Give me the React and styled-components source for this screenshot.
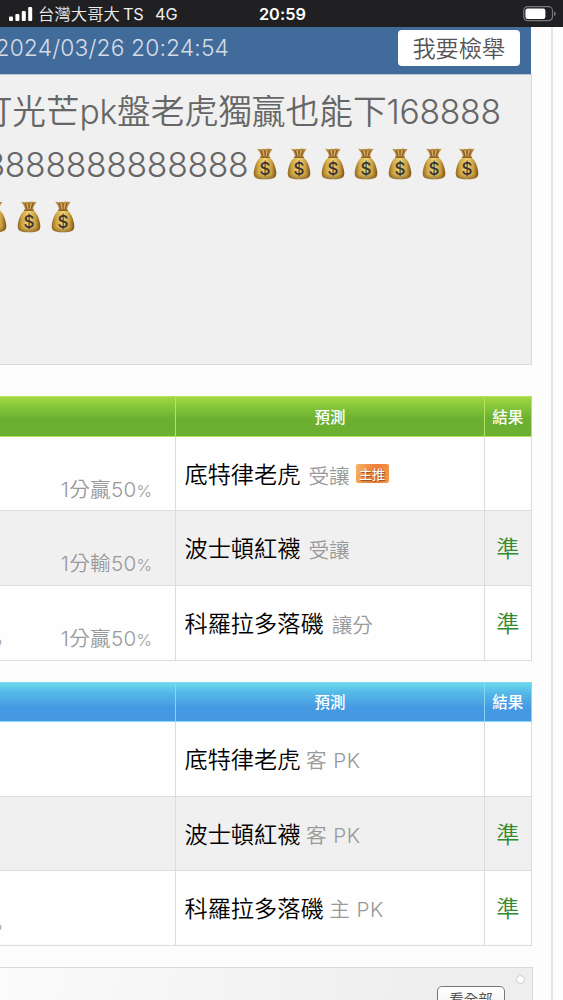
import React from "react";
import styled, { createGlobalStyle } from "styled-components";

const greenRows = [
    { odds: "1分贏50", team: "底特律老虎", kind: "受讓", hot: true },
    { odds: "1分輸50", team: "波士頓紅襪", kind: "受讓", result: "準" },
    { odds: "1分贏50", team: "科羅拉多落磯", kind: "讓分", result: "準", rest: true },
];

const blueRows = [
    { team: "底特律老虎", kind: "客 PK" },
    { team: "波士頓紅襪", kind: "客 PK", result: "準" },
    { team: "科羅拉多落磯", kind: "主 PK", result: "準", rest: true },
];

const MoneyBag = () => (
    <BagIcon viewBox="0 0 24 32">
        <defs>
            <linearGradient id="bag" x1="0" x2="1" y1="0" y2="0">
                <stop offset="0" stopColor="#94661c" />
                <stop offset="0.2" stopColor="#cfa947" />
                <stop offset="0.5" stopColor="#ecd477" />
                <stop offset="0.8" stopColor="#c99d3d" />
                <stop offset="1" stopColor="#7d4f14" />
            </linearGradient>
            <linearGradient id="bagShade" x1="0" x2="0" y1="0" y2="1">
                <stop offset="0.75" stopColor="#6b4210" stopOpacity="0" />
                <stop offset="1" stopColor="#6b4210" stopOpacity="0.6" />
            </linearGradient>
        </defs>
        <path d="M4.2 .8Q8 1.7 10 .7Q13 1.5 15 .6Q17.5 1.5 19.6 .7Q16.8 4.2 15.8 9H8.2Q7.4 4.3 4.2 .8Z" fill="#b98b40" />
        <path d="M8 2L10 8.6M12 2V8.5M16 2L14 8.6" stroke="#805420" strokeWidth="1" fill="none" />
        <path d="M10.2 2.2L11 8M14.2 2.2L13.2 8" stroke="#e0bd70" strokeWidth=".7" fill="none" />
        <path d="M8 9.2H16C20 11.5 22 17 23 22.5C24.3 29.5 21.5 31.3 12 31.3S-.3 29.5 1 22.5C2 17 4 11.5 8 9.2Z" fill="url(#bag)" />
        <path d="M8 9.2H16C20 11.5 22 17 23 22.5C24.3 29.5 21.5 31.3 12 31.3S-.3 29.5 1 22.5C2 17 4 11.5 8 9.2Z" fill="url(#bagShade)" />
        <path d="M7.6 9.2H16.4" stroke="#946526" strokeWidth="1.5" strokeLinecap="round" />
        <text x="12" y="27.2" textAnchor="middle" fontFamily="Inter, sans-serif" fontWeight="500" fontSize="17" fill="#3a3431">$</text>
    </BagIcon>
);

const PickTable = ({ tone, rows }) => (
    <Table>
        <HeadRow $tone={tone}>
            <HeadCell $tone={tone} />
            <HeadCell $tone={tone}>預測</HeadCell>
            <HeadCell $tone={tone}>結果</HeadCell>
        </HeadRow>
        {rows.map((row, i) => (
            <Row key={row.team} $even={i % 2 === 1} $short={tone === "green" ? i === 0 : i === 1}>
                <OddsCell>
                    <Rest>{row.rest && "%"}</Rest>
                    {row.odds && <Odds>{row.odds}<small>%</small></Odds>}
                </OddsCell>
                <PickCell>
                    <Team>{row.team}</Team>
                    <Kind $pk={tone === "blue"}>{row.kind}</Kind>
                    {row.hot && <Hot>主推</Hot>}
                </PickCell>
                <ResultCell>{row.result}</ResultCell>
            </Row>
        ))}
    </Table>
);

const App = () => {
    return (
        <>
            <GlobalStyle />
            <Screen>
                <StatusBar>
                    <Carrier>
                        <SignalIcon viewBox="0 0 24 14">
                            <rect x="0" y="9.4" width="4" height="4.6" rx="1" />
                            <rect x="6.4" y="7" width="4" height="7" rx="1" />
                            <rect x="12.8" y="4" width="4" height="10" rx="1" />
                            <rect x="19.2" y="0" width="4" height="14" rx="1" />
                        </SignalIcon>
                        <CarrierName>台灣大哥大</CarrierName>
                        <CarrierTag>TS</CarrierTag>
                        <Network>4G</Network>
                    </Carrier>
                    <Clock>20:59</Clock>
                    <BatterySide>
                        <BatteryIcon viewBox="0 0 33 16">
                            <rect x=".7" y=".7" width="28.8" height="14" rx="4" fill="none" stroke="#77777a" strokeWidth="1.2" />
                            <rect x="2.4" y="2.4" width="20" height="10.6" rx="2.3" fill="#fff" />
                            <path d="M31 5.3Q32.8 6 32.8 7.8T31 10.3Z" fill="#77777a" />
                        </BatteryIcon>
                    </BatterySide>
                </StatusBar>
                <Content>
                    <PostHeader>
                        <PostTime>2024/03/26 20:24:54</PostTime>
                        <ReportButton>我要檢舉</ReportButton>
                    </PostHeader>
                    <PostBody>
                        <PostLine $shift={-21.5}>
                            打光芒<Latin>pk</Latin>盤老虎獨贏也能下<Latin>168888</Latin>
                        </PostLine>
                        <PostLine $shift={-15.5}>
                            <Latin>8888888888888</Latin>
                            {Array.from({ length: 7 }, (_, i) => <MoneyBag key={i} />)}
                        </PostLine>
                        <PostLine $shift={-21.5}>
                            {Array.from({ length: 3 }, (_, i) => <MoneyBag key={i} />)}
                        </PostLine>
                    </PostBody>
                    <PickTable tone="green" rows={greenRows} />
                    <PickTable tone="blue" rows={blueRows} />
                    <MorePanel>
                        <MoreButton>看全部</MoreButton>
                        <Pin />
                    </MorePanel>
                </Content>
            </Screen>
        </>
    );
};

export default App;

const tones = {
    green: {
        height: "41px",
        line: "#b5e360",
        fill: "linear-gradient(#a2d741 0%, #8dca3b 20%, #6bb031 55%, #6bb031 100%)",
    },
    blue: {
        height: "40px",
        line: "#84d8f4",
        fill: "linear-gradient(#69d9ee 0%, #55b9e8 25%, #4599e1 65%, #4598e4 100%)",
    },
};

const GlobalStyle = createGlobalStyle`
    * {
        box-sizing: border-box;
    }

    body {
        margin: 0;
        background: #fdfdfd;
        font-family: Inter, "Noto Sans CJK TC", sans-serif;
    }
`

const Screen = styled.div`
    width: 563px;
    height: 1000px;
    overflow: hidden;
    background: #fdfdfd;
`

const StatusBar = styled.div`
    height: 27px;
    padding: 1px 7px 0 9px;
    display: grid;
    grid-template-columns: 1fr auto 1fr;
    align-items: center;
    background: #202022;
    color: #fff;
    line-height: 26px;
`

const Carrier = styled.div`
    display: flex;
    align-items: center;
    white-space: nowrap;
    font-size: 16.3px;
    color: #ededed;
`

const SignalIcon = styled.svg`
    width: 24px;
    height: 14px;
    margin-right: 5px;
    fill: #fff;
`

const CarrierName = styled.span`
    font-size: 16.3px;
    font-weight: 350;
    letter-spacing: 0.1px;
`

const CarrierTag = styled.span`
    margin-left: 3px;
    letter-spacing: -0.2px;
`

const Network = styled.span`
    margin-left: 11.5px;
`

const Clock = styled.div`
    font-size: 16.3px;
    font-weight: 600;
    letter-spacing: 0.1px;
`

const BatterySide = styled.div`
    display: flex;
    justify-content: flex-end;
`

const BatteryIcon = styled.svg`
    width: 33px;
    height: 16px;
`

const Content = styled.div`
    width: 553px;
    height: 973px;
    overflow: hidden;
    border-right: 2px solid #e4e4e6;
`

const PostHeader = styled.div`
    width: 531px;
    height: 47px;
    padding: 3px 11px 8px 0;
    display: flex;
    justify-content: space-between;
    background: #416b9b;
`

const PostTime = styled.div`
    margin-left: -4.5px;
    font-size: 22.8px;
    font-weight: 350;
    line-height: 36px;
    letter-spacing: 0.15px;
    white-space: nowrap;
    color: #d5dce5;
`

const ReportButton = styled.div`
    width: 122.5px;
    height: 36px;
    padding-bottom: 2px;
    border-radius: 4px;
    display: flex;
    justify-content: center;
    align-items: center;
    background: #fff;
    color: #555;
    font-size: 23.2px;
    font-weight: 350;
`

const PostBody = styled.div`
    width: 532px;
    height: 291px;
    padding-top: 9.5px;
    overflow: hidden;
    background: #f0f0f0;
    border: solid #dadada;
    border-width: 1px 1.5px 1px 0;
    border-top-color: #b6c3d3;
    color: #666;
`

const PostLine = styled.div`
    height: 53px;
    margin-left: ${({ $shift }) => $shift}px;
    display: flex;
    align-items: center;
    line-height: 53px;
    white-space: nowrap;
    font-size: 33.7px;
    font-weight: 350;
`

const Latin = styled.span`
    font-size: 33.7px;
    letter-spacing: -0.3px;
`

const BagIcon = styled.svg`
    width: 24px;
    height: 32px;
    margin: 0 4.85px 1px;
    flex: none;
`

const Table = styled.div`
    width: 531.5px;
    margin-top: 31px;

    & + & {
        margin-top: 21px;
    }
`

const HeadRow = styled.div`
    height: ${({ $tone }) => tones[$tone].height};
    display: grid;
    grid-template-columns: 176px 309px 1fr;
    background: ${({ $tone }) => tones[$tone].fill};
    border: solid ${({ $tone }) => tones[$tone].line};
    border-width: 1px 0;
`

const HeadCell = styled.div`
    padding-bottom: 2px;
    display: flex;
    justify-content: center;
    align-items: center;
    border-right: 1px solid ${({ $tone }) => tones[$tone].line};
    color: #fff;
    font-size: 15.5px;
    font-weight: 500;
`

const Row = styled.div`
    height: ${({ $short }) => ($short ? 74 : 75)}px;
    display: grid;
    grid-template-columns: 176px 309px 1fr;
    background: ${({ $even }) => ($even ? "#f0f0f0" : "#fefefe")};
    border-bottom: 1px solid #dcdcdc;

    & > * {
        border-right: 1px solid #dcdcdc;
    }
`

const OddsCell = styled.div`
    padding: 32px 23px 0 0;
    display: flex;
    justify-content: space-between;
    overflow: hidden;
    color: #999;
    font-weight: 350;
    line-height: 42px;
`

const Rest = styled.span`
    margin-left: -13px;
    font-size: 17px;
`

const Odds = styled.span`
    font-size: 20.6px;
    letter-spacing: 0.3px;

    small {
        font-size: 16.5px;
        letter-spacing: 0;
    }
`

const PickCell = styled.div`
    padding: 0 0 2px 8.5px;
    display: flex;
    align-items: center;
    white-space: nowrap;
`

const Team = styled.span`
    font-size: 23.2px;
    font-weight: 350;
    color: #000;
`

const Kind = styled.span`
    margin: ${({ $pk }) => ($pk ? "2px 0 0 5.5px" : "4px 0 0 8px")};
    font-size: 20.6px;
    font-weight: 350;
    letter-spacing: ${({ $pk }) => ($pk ? "0.5px" : 0)};
    color: #999;
`

const Hot = styled.span`
    width: 33px;
    height: 19px;
    margin: 2px 0 0 6px;
    padding-bottom: 1px;
    border-radius: 2px;
    display: flex;
    justify-content: center;
    align-items: center;
    background: linear-gradient(105deg, #f6b462, #ee7c36 55%, #f39a4c);
    color: #fff;
    font-size: 13px;
    font-weight: 400;
    text-shadow: 1px 1px 1px #8c4a20;
`

const ResultCell = styled.div`
    padding-bottom: 2px;
    display: flex;
    justify-content: center;
    align-items: center;
    color: #348a2c;
    font-size: 23.2px;
    font-weight: 350;
`

const MorePanel = styled.div`
    width: 533px;
    height: 80px;
    margin-top: 21px;
    padding: 6px 7px 0 0;
    display: flex;
    justify-content: flex-end;
    align-items: flex-start;
    background: linear-gradient(100deg, #fbfbfb, #eee 80%);
    border: solid #d9d9d9;
    border-width: 1px 1.5px 0 0;
`

const MoreButton = styled.div`
    width: 68px;
    height: 34px;
    margin: 12px 11px 0 0;
    padding-top: 1px;
    border: 1px solid #777;
    border-radius: 5px;
    background: linear-gradient(#fff, #eee);
    color: #555;
    font-size: 14.5px;
    text-align: center;
`

const Pin = styled.div`
    width: 9px;
    height: 9px;
    margin-top: 1px;
    border: 1.5px solid #ccc;
    border-radius: 50%;
    background: #fff;
`
